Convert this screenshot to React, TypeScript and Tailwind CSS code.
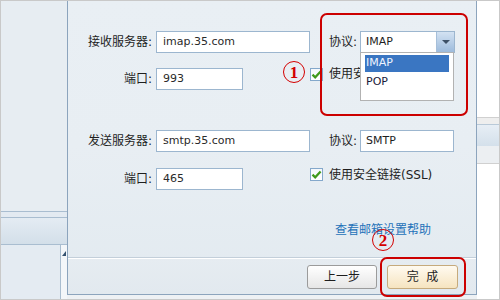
import React from 'react';

const latin = { fontFamily: '"DejaVu Sans", "Noto Sans CJK SC", sans-serif' };

function Check() {
  return (
    <div className="w-[13px] h-[13px] border border-[#84a8cb] bg-gradient-to-b from-[#f4f8fc] to-white flex items-center justify-center shrink-0">
      <svg width="11" height="11" viewBox="0 0 11 11">
        <path d="M1.5 5.6 L4.2 8.3 L9.6 2.4" fill="none" stroke="#3f9a1c" strokeWidth="2.2" />
      </svg>
    </div>
  );
}

function Field({ value, width }: { value: string; width: string }) {
  return (
    <div
      className={`${width} h-[22px] border border-[#9cb6cf] bg-white flex items-center pl-[6px] text-[11px] text-[#2a2a2a]`}
    >
      {value}
    </div>
  );
}

function Label({ text }: { text: string }) {
  return <div className="w-[88px] text-right pr-[4px] text-[12px] text-[#1e1e1e]">{text}</div>;
}

function Marker({ n }: { n: string }) {
  return (
    <div className="w-[22px] h-[22px] rounded-full border-[1.5px] border-[#d40000] flex items-center justify-center">
      <span className="text-[17px] leading-none text-[#d40000] font-bold" style={{ fontFamily: '"Liberation Serif", serif' }}>
        {n}
      </span>
    </div>
  );
}

export default function App() {
  return (
    <div className="relative w-[500px] h-[300px] overflow-hidden border border-[#c9c9c9] bg-[#eef2f5] flex" style={latin}>
      {/* left strip */}
      <div className="w-[66px] h-full flex flex-col bg-[#e7edf2]">
        <div className="h-[210px]" />
        <div className="h-[7px] border-t border-b border-[#a9bdd0] bg-[#e3eaf1]" />
        <div className="h-[27px] bg-gradient-to-b from-[#e4ecf3] to-[#d3dfe9] border-b border-[#a9bdd0]" />
        <div className="flex-1 flex bg-[#e4ebf2]">
          <div className="flex-1" />
          <div className="w-[7px] border-l border-[#a9bdd0] bg-[#f3f6f9] pt-[6px] flex justify-center">
            <div className="w-0 h-0 border-l-[4px] border-r-[0px] border-b-[5px] border-l-transparent border-b-[#34516f]" />
          </div>
        </div>
      </div>

      {/* dialog */}
      <div className="w-[410px] h-full flex flex-col">
        <div className="h-[294px] border-l border-r border-b border-[#8ca4bd] bg-gradient-to-b from-[#e9eff4] via-[#e8eef3] to-[#e2eaf0] flex flex-col">
          <div className="pt-[30px] text-[12px]">
            {/* row 1 */}
            <div className="flex items-center h-[22px]">
              <Label text="接收服务器:" />
              <Field value="imap.35.com" width="w-[154px]" />
              <div className="ml-[19px] w-[31px] text-[12px] text-[#1e1e1e]">协议:</div>
              <div className="relative w-[95px] h-[22px] border border-[#9cb6cf] bg-white flex">
                <div className="flex-1 flex items-center pl-[5px] text-[11px] text-[#1e1e1e]">IMAP</div>
                <div className="w-[18px] h-full bg-gradient-to-b from-[#d3e2f2] to-[#9dbbdc] border-l border-[#a6bfd9] flex items-center justify-center">
                  <div className="w-0 h-0 border-l-[4px] border-r-[4px] border-t-[4px] border-l-transparent border-r-transparent border-t-[#3c5066]" />
                </div>
                <div className="absolute left-[-1px] top-[20px] w-[94px] h-[49px] bg-white border border-[#b2b2b2] z-10 pt-[2px] px-[4px]">
                  <div className="h-[17px] bg-[#3a76c2] text-[#eef4ff] text-[11px] flex items-center pl-[1px]">IMAP</div>
                  <div className="h-[17px] mt-[2px] text-[#1a1a3a] text-[11px] flex items-center pl-[1px]">POP</div>
                </div>
              </div>
            </div>
            {/* row 2 */}
            <div className="flex items-center h-[22px] mt-[15px]">
              <Label text="端口:" />
              <Field value="993" width="w-[87px]" />
              <div className="ml-[67px] -mt-[10px] flex items-center">
                <Check />
                <span className="ml-[6px] text-[12px] text-[#1e1e1e]">使用安全链接(SSL)</span>
              </div>
            </div>
            {/* row 3 */}
            <div className="flex items-center h-[22px] mt-[40px]">
              <Label text="发送服务器:" />
              <Field value="smtp.35.com" width="w-[154px]" />
              <div className="ml-[19px] w-[31px] text-[12px] text-[#1e1e1e]">协议:</div>
              <div className="w-[94px] h-[22px] border border-[#9cb6cf] bg-white flex items-center pl-[5px] text-[11px] text-[#1e1e1e]">
                SMTP
              </div>
            </div>
            {/* row 4 */}
            <div className="flex items-center h-[22px] mt-[16px]">
              <Label text="端口:" />
              <Field value="465" width="w-[87px]" />
              <div className="ml-[67px] -mt-[9px] flex items-center">
                <Check />
                <span className="ml-[6px] text-[12px] text-[#1e1e1e]">使用安全链接(SSL)</span>
              </div>
            </div>
            <div className="mt-[32px] pl-[267px] h-[16px] text-[12px] text-[#2472b9] leading-[16px]">查看邮箱设置帮助</div>
          </div>

          {/* footer */}
          <div className="mt-auto h-[37px] border-t border-[#c3cfda] shadow-[inset_0_1px_0_#ffffff] bg-gradient-to-b from-[#e6ecf1] to-[#e2e9ef] flex justify-end items-start pt-[7px] pr-[18px] gap-[10px]">
            <button className="w-[70px] h-[24px] rounded-[3px] border border-[#9b9b9b] bg-gradient-to-b from-white to-[#e6e6e6] text-[12px] text-[#1e1e1e]">
              上一步
            </button>
            <button className="w-[71px] h-[24px] rounded-[3px] border border-[#c6aa7c] bg-gradient-to-b from-[#fffaf0] to-[#f6e4c0] text-[12px] text-[#1e1e1e]">
              完&nbsp;&nbsp;成
            </button>
          </div>
        </div>
        <div className="flex-1 bg-[#eef1f4]" />
      </div>

      {/* right strip */}
      <div className="flex-1 h-full bg-white flex flex-col">
        <div className="h-[116px]" />
        <div className="h-[7px] border-t border-[#d0d0d0] bg-[#eeeeee]" />
        <div className="h-[22px] border-t border-[#b9c9d8] bg-gradient-to-b from-[#e7eef5] to-[#d4e0eb]" />
        <div className="h-[18px] bg-[#eceff2] border-b border-[#d0d0d0]" />
        <div className="flex-1" />
      </div>

      {/* annotations */}
      <div className="absolute left-[319px] top-[12px] w-[148px] h-[103px] border-2 border-[#cc0000] rounded-[7px] pointer-events-none z-20" />
      <div className="absolute left-[379px] top-[256px] w-[86px] h-[40px] border-2 border-[#cc0000] rounded-[7px] pointer-events-none z-20" />
      <div className="absolute left-[282px] top-[60px] z-20">
        <Marker n="1" />
      </div>
      <div className="absolute left-[371px] top-[228px] z-20">
        <Marker n="2" />
      </div>
    </div>
  );
}
